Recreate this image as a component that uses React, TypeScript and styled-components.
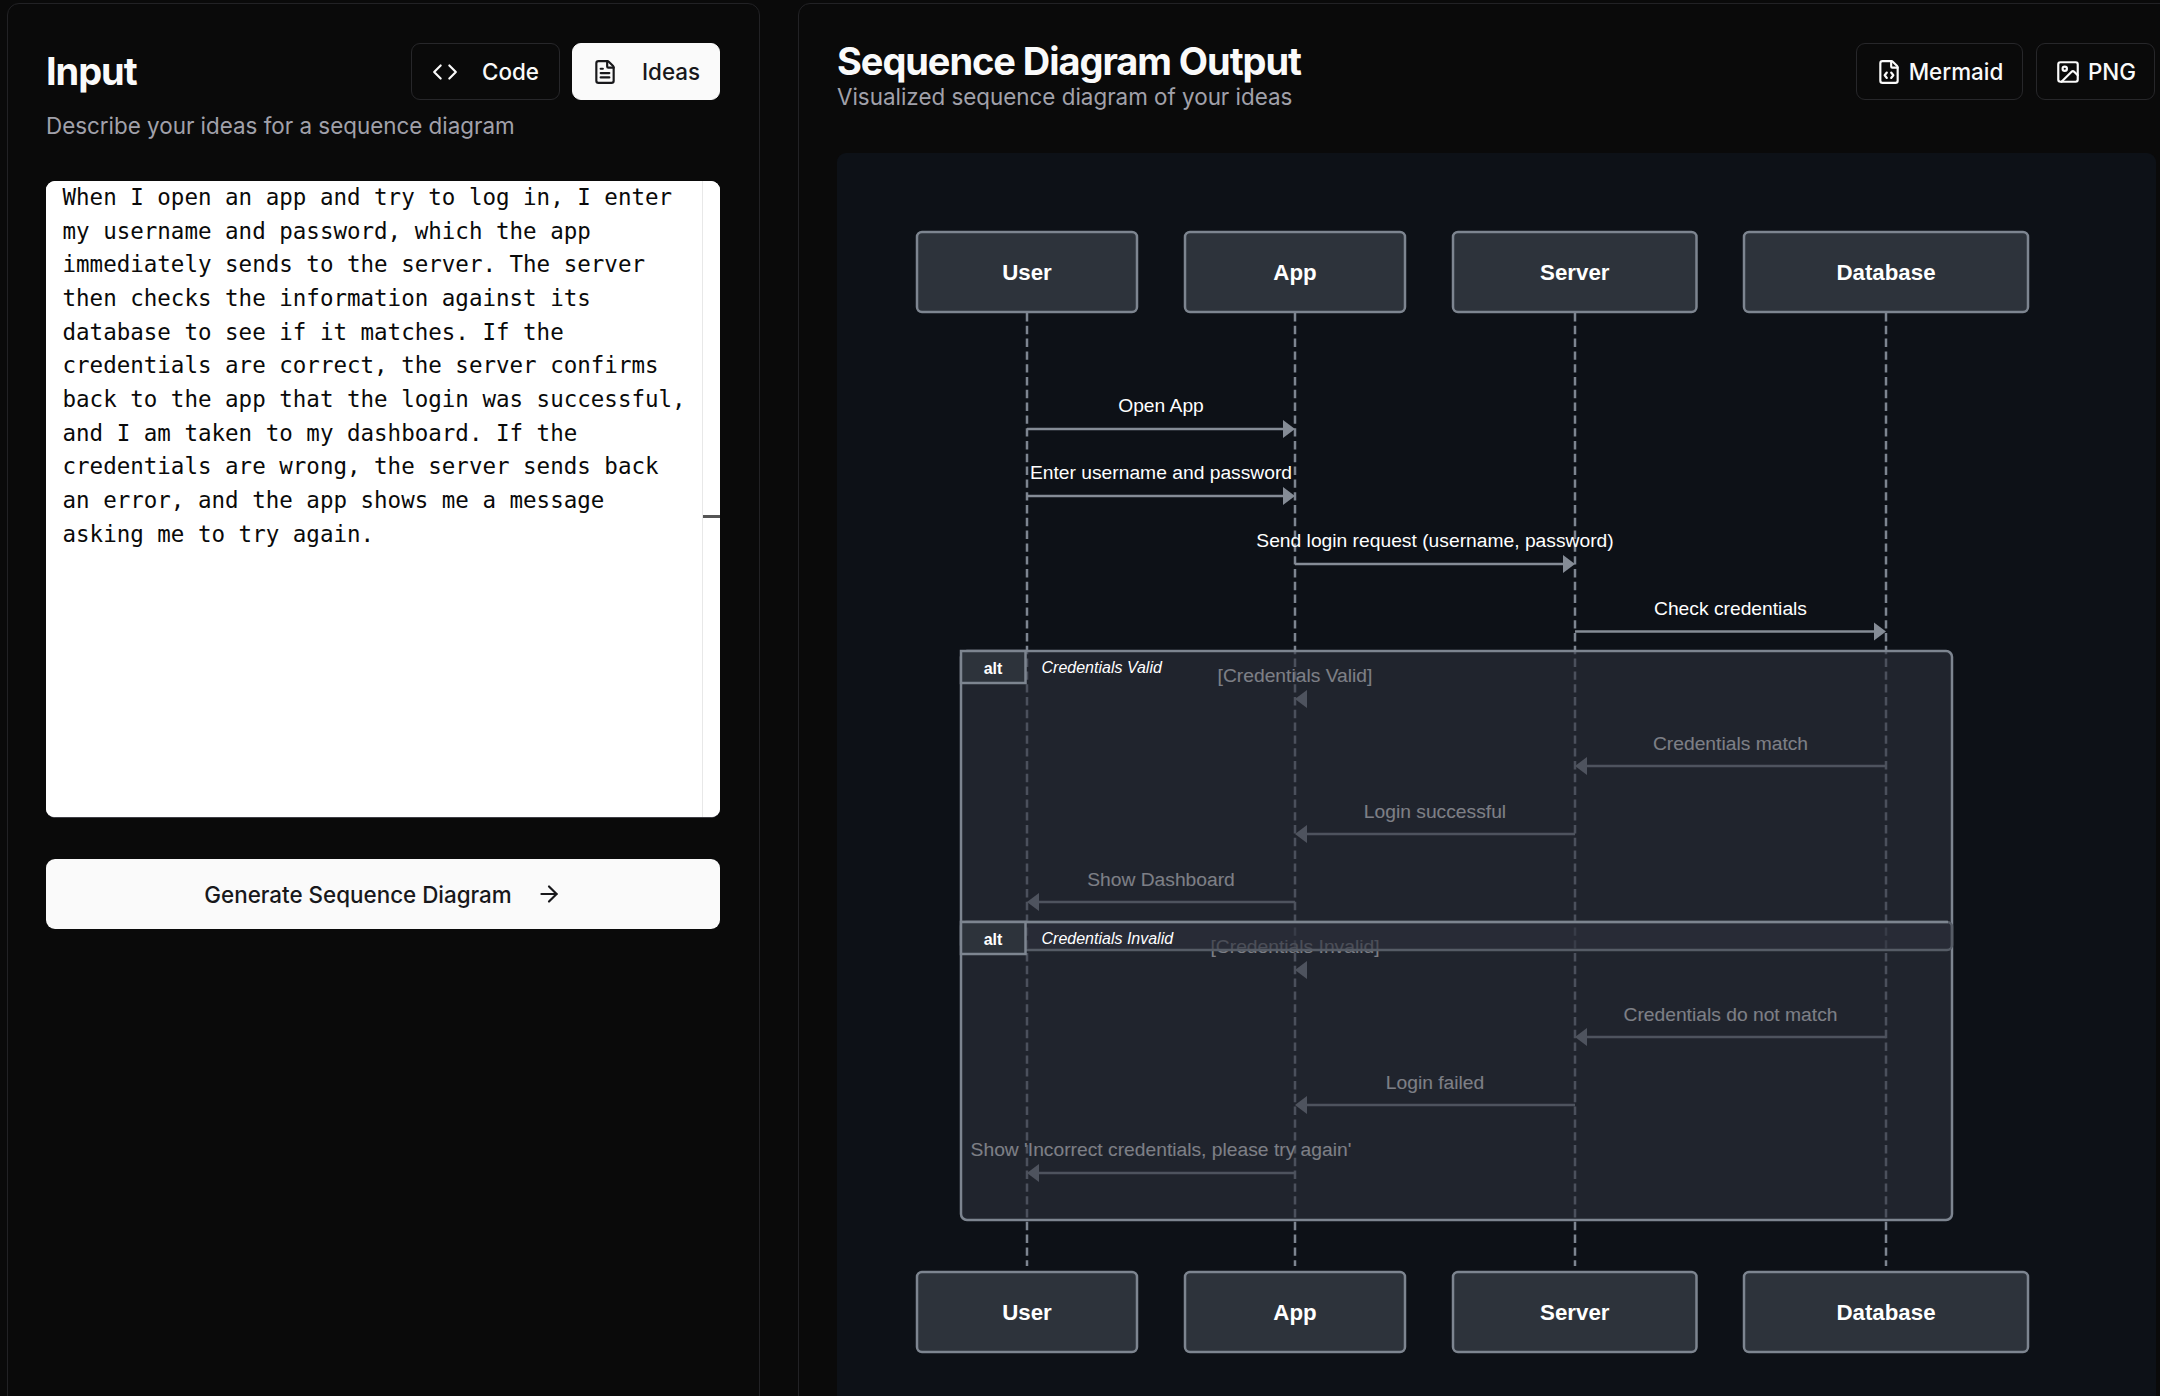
import React from "react";
import styled, { createGlobalStyle } from "styled-components";
import { ArrowRight, Code, FileCode, FileText, Image } from "lucide-react";

const ideasText =
  "When I open an app and try to log in, I enter my username and password, which the app immediately sends to the server. The server then checks the information against its database to see if it matches. If the credentials are correct, the server confirms back to the app that the login was successful, and I am taken to my dashboard. If the credentials are wrong, the server sends back an error, and the app shows me a message asking me to try again.";

const actors = [
  { name: "User", x: 917, w: 220, cx: 1027 },
  { name: "App", x: 1185, w: 220, cx: 1295 },
  { name: "Server", x: 1453, w: 243.5, cx: 1575 },
  { name: "Database", x: 1744, w: 284, cx: 1886 },
];

const messages = [
  { text: "Open App", from: 1027, to: 1295, y: 428, labelY: 411 },
  { text: "Enter username and password", from: 1027, to: 1295, y: 495, labelY: 478 },
  { text: "Send login request (username, password)", from: 1295, to: 1575, y: 563, labelY: 546 },
  { text: "Check credentials", from: 1575, to: 1886, y: 630.5, labelY: 614 },
  { text: "Credentials match", from: 1886, to: 1575, y: 765, labelY: 749 },
  { text: "Login successful", from: 1575, to: 1295, y: 833, labelY: 817 },
  { text: "Show Dashboard", from: 1295, to: 1027, y: 901, labelY: 885 },
  { text: "Credentials do not match", from: 1886, to: 1575, y: 1036, labelY: 1020 },
  { text: "Login failed", from: 1575, to: 1295, y: 1104, labelY: 1088 },
  { text: "Show 'Incorrect credentials, please try again'", from: 1295, to: 1027, y: 1172, labelY: 1155 },
];

const notes = [
  { text: "[Credentials Valid]", y: 698, labelY: 681 },
  { text: "[Credentials Invalid]", y: 969, labelY: 952 },
];

const GlobalStyle = createGlobalStyle`
  html, body {
    margin: 0;
    padding: 0;
    background: #0a0a0a;
    overflow: hidden;
  }
  * {
    box-sizing: border-box;
  }
`;

const Page = styled.div`
  display: flex;
  gap: 38px;
  height: 1396px;
  padding: 3px 0 0 7px;
  overflow: hidden;
  font-family: Inter, "Liberation Sans", sans-serif;
  color: #fafafa;
  -webkit-font-smoothing: antialiased;
`;

const Card = styled.section<{ $width: number }>`
  flex: none;
  width: ${(p) => p.$width}px;
  height: 1500px;
  background: #0a0a0a;
  border: 1px solid #222225;
  border-radius: 12px;
  padding: 39px 0 0 38px;
`;

const InputHeader = styled.div`
  display: flex;
  justify-content: space-between;
  align-items: center;
  width: 674px;
  height: 57px;
`;

const OutputHeader = styled.div`
  display: flex;
  justify-content: space-between;
  align-items: flex-start;
  width: 1318px;
  height: 110px;
`;

const CardTitle = styled.h2`
  margin: 0;
  font-size: 38px;
  line-height: 46px;
  font-weight: 700;
  letter-spacing: -0.028em;
  color: #fafafa;
`;

const InputTitle = styled(CardTitle)`
  margin-top: -2px;
`;

const OutputTitle = styled(CardTitle)`
  margin-top: -5px;
`;

const CardHint = styled.p`
  margin: 0;
  font-size: 22.4px;
  line-height: 30px;
  color: #a1a1aa;
`;

const InputHint = styled(CardHint)`
  margin-top: 11px;
`;

const OutputHint = styled(CardHint)`
  margin-top: -2px;
`;

const ButtonRow = styled.div<{ $gap: number }>`
  display: flex;
  gap: ${(p) => p.$gap}px;
`;

const ToolButton = styled.button<{ $active?: boolean; $gap: number; $width: number }>`
  display: flex;
  align-items: center;
  justify-content: center;
  gap: ${(p) => p.$gap}px;
  width: ${(p) => p.$width}px;
  height: 57px;
  padding: 0;
  border: 1px solid ${(p) => (p.$active ? "#fafafa" : "#27272a")};
  border-radius: 9px;
  background: ${(p) => (p.$active ? "#fafafa" : "#0a0a0a")};
  color: ${(p) => (p.$active ? "#18181b" : "#fafafa")};
  font-family: inherit;
  font-size: 22.4px;
  font-weight: 500;
`;

const EditorWrap = styled.div`
  position: relative;
  width: 674px;
  height: 637px;
  margin-top: 40px;
  border-radius: 9px;
  background: #fff;
  border-bottom: 1px solid #3f3f46;
  overflow: hidden;
`;

const Editor = styled.textarea`
  display: block;
  width: 100%;
  height: 100%;
  padding: 0 30px 0 16.5px;
  border: 0;
  outline: 0;
  resize: none;
  overflow: hidden;
  background: #fff;
  color: #0a0a0a;
  font-family: "DejaVu Sans Mono", monospace;
  font-size: 22.5px;
  line-height: 33.65px;
`;

const ScrollTrack = styled.div`
  position: absolute;
  top: 0;
  right: 0;
  bottom: 0;
  width: 18px;
  border-left: 1px solid #e8e8e8;
`;

const ScrollMark = styled.div`
  position: absolute;
  top: 334px;
  left: 0;
  right: 0;
  height: 3px;
  background: #555;
`;

const GenerateButton = styled.button`
  display: flex;
  align-items: center;
  justify-content: center;
  gap: 24px;
  width: 674px;
  height: 70px;
  margin-top: 41px;
  border: 0;
  border-radius: 9px;
  background: #fafafa;
  color: #18181b;
  font-family: inherit;
  font-size: 22.4px;
  font-weight: 500;
`;

const DiagramPanel = styled.div`
  width: 1319px;
  height: 1300px;
  border-radius: 9px;
  background: #0d1117;
  overflow: hidden;
`;

const DiagramSvg = styled.svg`
  display: block;
  font-family: "Liberation Sans", Arial, sans-serif;
`;

const ActorBox = ({ name, x, w, y }: { name: string; x: number; w: number; y: number }) => (
  <g>
    <rect x={x} y={y} width={w} height={80} rx={5} fill="#2d333b" stroke="#7d8590" strokeWidth={2.5} />
    <text x={x + w / 2} y={y + 47.5} textAnchor="middle" fontSize={22.3} fontWeight={700} fill="#fff">
      {name}
    </text>
  </g>
);

const AltLabel = ({ y, h, text }: { y: number; h: number; text: string }) => (
  <g>
    <rect x={961} y={y} width={64.5} height={h} fill="#2d333b" stroke="#7d8590" strokeWidth={2.5} />
    <text x={993} y={y + 22.5} textAnchor="middle" fontSize={16} fontWeight={700} fill="#fff">
      {"alt"}
    </text>
    <text x={1041.5} y={y + 22} fontSize={16} fontStyle="italic" fill="#fff">
      {text}
    </text>
  </g>
);

const Diagram = () => (
  <DiagramSvg width={1319} height={1244} viewBox="837 152 1319 1244">
    {actors.map((a) => (
      <line key={a.name} x1={a.cx} x2={a.cx} y1={312} y2={1265} stroke="#7d8590" strokeWidth={2.5} strokeDasharray="8.4 4.4" />
    ))}
    {messages.map((m) => {
      const dir = m.to > m.from ? 1 : -1;
      return (
        <g key={m.text}>
          <text x={(m.from + m.to) / 2} y={m.labelY} textAnchor="middle" fontSize={19.25} fill="#fff">
            {m.text}
          </text>
          <line x1={m.from} x2={m.to - dir * 10} y1={m.y} y2={m.y} stroke="#858c96" strokeWidth={2.5} />
          <polygon points={`${m.to},${m.y} ${m.to - dir * 12},${m.y - 9} ${m.to - dir * 12},${m.y + 9}`} fill="#858c96" />
        </g>
      );
    })}
    {notes.map((n) => (
      <g key={n.text}>
        <text x={1295} y={n.labelY} textAnchor="middle" fontSize={19.25} fill="#fff">
          {n.text}
        </text>
        <polygon points={`1295,${n.y} 1307,${n.y - 9} 1307,${n.y + 9}`} fill="#858c96" />
      </g>
    ))}
    <rect x={961} y={650} width={991} height={569} rx={6} fill="#2d313b" fillOpacity={0.62} stroke="#7d8590" strokeWidth={2.5} />
    <rect x={961} y={921} width={991} height={28} rx={5} fill="#2d313b" fillOpacity={0.62} stroke="#565c66" strokeWidth={2.5} />
    <line x1={961} x2={1948} y1={921} y2={921} stroke="#7d8590" strokeWidth={2.5} />
    <AltLabel y={650} h={32} text="Credentials Valid" />
    <AltLabel y={921} h={32} text="Credentials Invalid" />
    {actors.map((a) => (
      <ActorBox key={a.name} name={a.name} x={a.x} w={a.w} y={231} />
    ))}
    {actors.map((a) => (
      <ActorBox key={a.name} name={a.name} x={a.x} w={a.w} y={1271} />
    ))}
  </DiagramSvg>
);

export default function App() {
  return (
    <>
      <GlobalStyle />
      <Page>
        <Card $width={753}>
          <InputHeader>
            <InputTitle>Input</InputTitle>
            <ButtonRow $gap={12}>
              <ToolButton $gap={24} $width={149}>
                <Code size={26} />
                Code
              </ToolButton>
              <ToolButton $active $gap={24} $width={148}>
                <FileText size={26} />
                Ideas
              </ToolButton>
            </ButtonRow>
          </InputHeader>
          <InputHint>Describe your ideas for a sequence diagram</InputHint>
          <EditorWrap>
            <Editor readOnly defaultValue={ideasText} />
            <ScrollTrack>
              <ScrollMark />
            </ScrollTrack>
          </EditorWrap>
          <GenerateButton>
            Generate Sequence Diagram
            <ArrowRight size={26} />
          </GenerateButton>
        </Card>
        <Card $width={1420}>
          <OutputHeader>
            <div>
              <OutputTitle>Sequence Diagram Output</OutputTitle>
              <OutputHint>Visualized sequence diagram of your ideas</OutputHint>
            </div>
            <ButtonRow $gap={13}>
              <ToolButton $gap={7} $width={167}>
                <FileCode size={26} />
                Mermaid
              </ToolButton>
              <ToolButton $gap={7} $width={119}>
                <Image size={26} />
                PNG
              </ToolButton>
            </ButtonRow>
          </OutputHeader>
          <DiagramPanel>
            <Diagram />
          </DiagramPanel>
        </Card>
      </Page>
    </>
  );
}
